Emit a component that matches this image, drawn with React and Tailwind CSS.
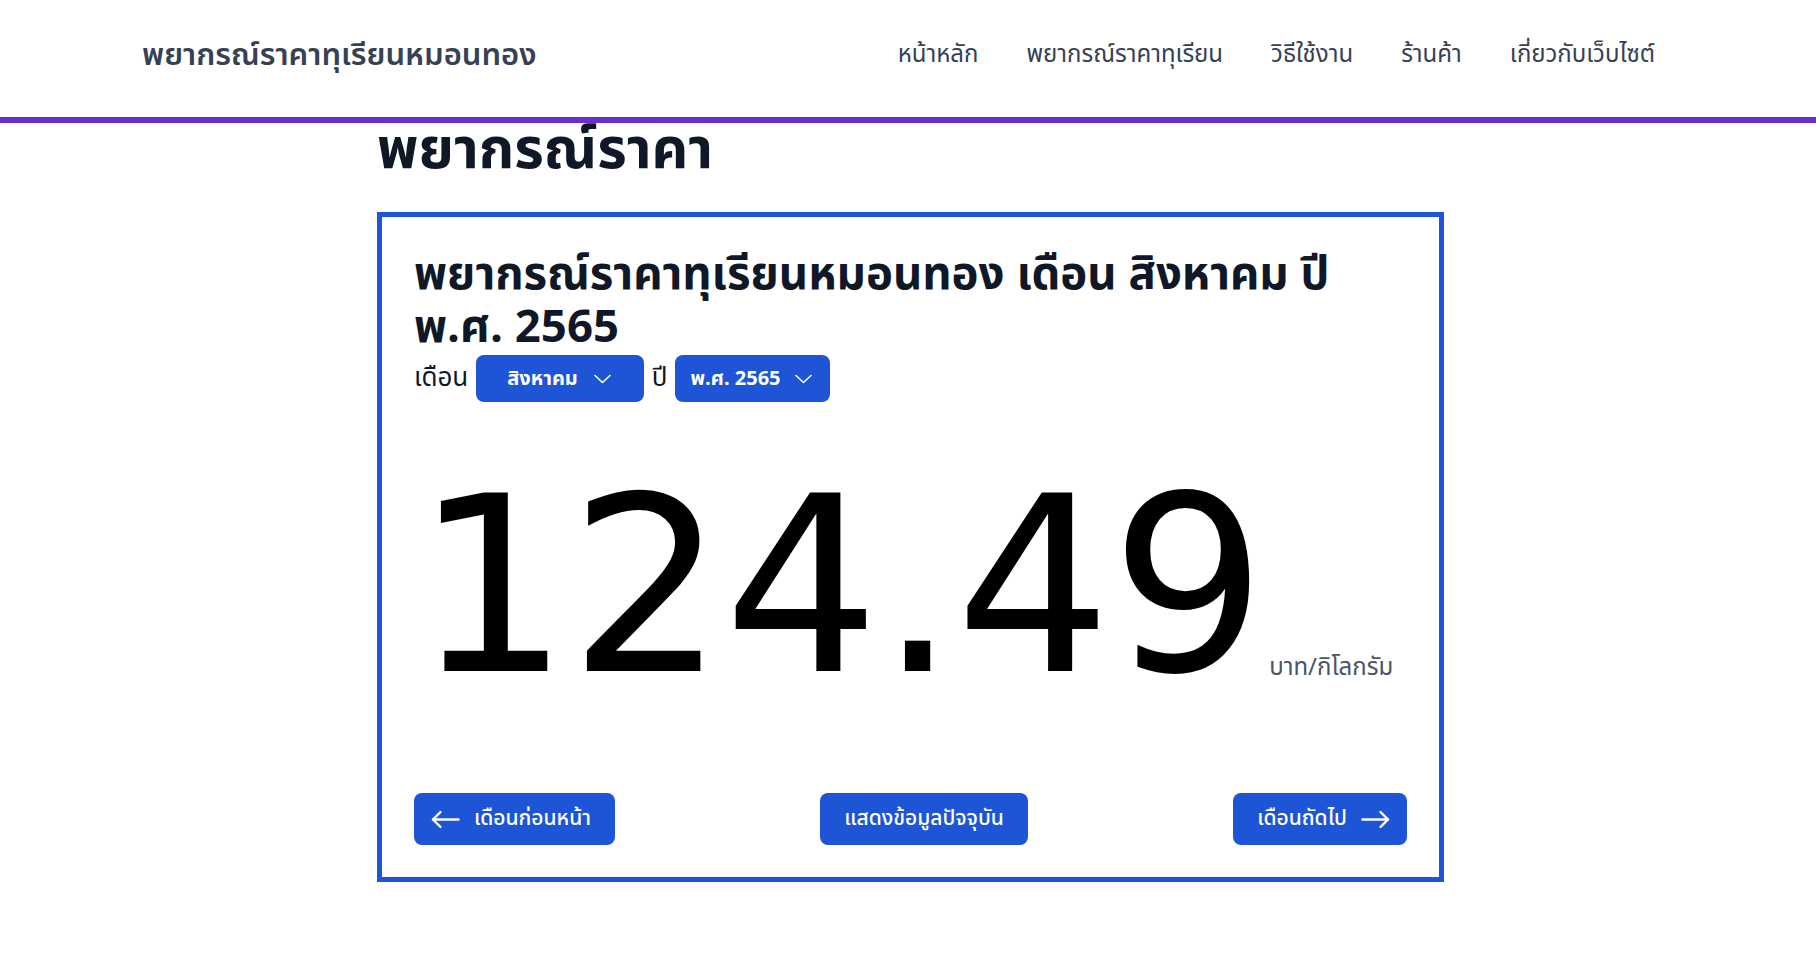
import React, { useState } from "react";

const thai = { fontFamily: '"Noto Sans Thai", "Noto Sans", "DejaVu Sans", sans-serif' };

function Chevron() {
  return (
    <svg width="17" height="10" viewBox="0 0 17 10" fill="none" stroke="currentColor" strokeWidth="1.6" strokeLinecap="round" strokeLinejoin="round">
      <polyline points="1,1.5 8.5,8.5 16,1.5" />
    </svg>
  );
}

function LongArrow({ dir = "left" }) {
  return (
    <svg width="29" height="19" viewBox="0 0 29 19" fill="none" stroke="currentColor" strokeWidth="2.4" strokeLinecap="round" strokeLinejoin="round" className={dir === "right" ? "rotate-180" : ""}>
      <path d="M27.5 9.5H2" />
      <polyline points="9.5,2 2,9.5 9.5,17" />
    </svg>
  );
}

export default function App() {
  const [month] = useState("สิงหาคม");
  const [year] = useState("พ.ศ. 2565");
  const [price] = useState("124.49");

  return (
    <div className="min-h-screen bg-white" style={thai}>
      {/* Navbar */}
      <header className="border-b-[6px] border-[#6a2fcc]">
        <div className="flex items-center justify-between h-[117px] pl-[142px] pr-[161px]">
          <a className="text-[31px] font-semibold text-gray-700 -mt-1">พยากรณ์ราคาทุเรียนหมอนทอง</a>
          <nav className="flex items-center gap-12 text-2xl text-gray-700 -mt-2">
            <a>หน้าหลัก</a>
            <a>พยากรณ์ราคาทุเรียน</a>
            <a>วิธีใช้งาน</a>
            <a>ร้านค้า</a>
            <a>เกี่ยวกับเว็บไซต์</a>
          </nav>
        </div>
      </header>

      <main className="ml-[377px] w-[1067px]">
        <h1 className="text-[57px] font-bold leading-none text-gray-900">พยากรณ์ราคา</h1>

        {/* Forecast card */}
        <div className="mt-8 border-[5px] border-[#1d55d6] p-8">
          <h2 className="text-[45.5px] font-bold leading-[53px] text-gray-900">
            พยากรณ์ราคาทุเรียนหมอนทอง เดือน {month} ปี {year}
          </h2>

          <div className="flex items-center gap-2 text-[26px] text-gray-900">
            <span>เดือน</span>
            <button className="flex items-center gap-4 rounded-lg bg-[#1d55d6] pl-[31px] pr-[33px] h-[47px] text-xl font-bold text-white">
              {month}
              <Chevron />
            </button>
            <span>ปี</span>
            <button className="flex items-center gap-[14px] rounded-lg bg-[#1d55d6] pl-[15px] pr-[18px] h-[47px] text-xl font-bold text-white">
              {year}
              <Chevron />
            </button>
          </div>

          {/* Price */}
          <div className="flex items-end mt-[62px]">
            <span
              className="text-[245px] leading-none tracking-[-1px] text-black"
              style={{ fontFamily: '"DejaVu Sans", sans-serif' }}
            >
              {price}
            </span>
            <span className="ml-1 mb-[25px] text-2xl text-gray-600">บาท/กิโลกรัม</span>
          </div>

          <div className="flex items-center justify-between mt-[84px]">
            <button className="flex items-center gap-[14px] rounded-lg bg-[#1d55d6] pl-[17px] pr-6 h-[52px] text-[21px] font-medium text-white">
              <LongArrow dir="left" />
              เดือนก่อนหน้า
            </button>
            <button className="flex items-center rounded-lg bg-[#1d55d6] px-6 h-[52px] text-[21px] font-medium text-white">
              แสดงข้อมูลปัจจุบัน
            </button>
            <button className="flex items-center gap-[14px] rounded-lg bg-[#1d55d6] pl-6 pr-[17px] h-[52px] text-[21px] font-medium text-white">
              เดือนถัดไป
              <LongArrow dir="right" />
            </button>
          </div>
        </div>
      </main>
    </div>
  );
}
